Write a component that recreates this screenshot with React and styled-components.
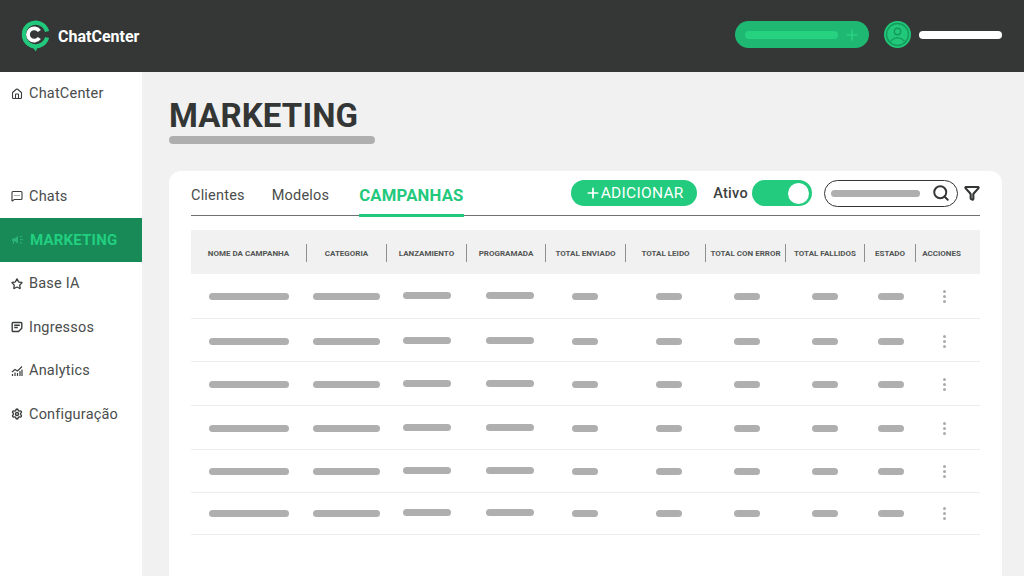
import React from "react";
import styled, { createGlobalStyle } from "styled-components";
import { Home, MessageSquareMore, Star, Settings, Search, Filter, Plus } from "lucide-react";

const GlobalStyle = createGlobalStyle`
  html, body {
    margin: 0;
    height: 100%;
    overflow: hidden;
    background: #f1f1f1;
    font-family: "Roboto", "Liberation Sans", sans-serif;
  }
`;

const Page = styled.div`
  width: 1024px;
  height: 576px;
  display: flex;
  flex-direction: column;
  overflow: hidden;
`;

const Header = styled.header`
  height: 72px;
  flex: none;
  background: #343736;
  display: flex;
  align-items: center;
  padding: 0 22px 0 20px;
`;

const Brand = styled.div`
  display: flex;
  align-items: center;
  gap: 8px;
  color: #fff;
  font-weight: 700;
  font-size: 16px;
  flex: 1;
`;

const HeaderRight = styled.div`
  display: flex;
  align-items: center;
  margin-bottom: 3px;
`;

const HeaderPill = styled.div`
  width: 134px;
  height: 27px;
  box-sizing: border-box;
  border-radius: 14px;
  background: #1fb872;
  display: flex;
  align-items: center;
  gap: 5px;
  padding: 0 8px 0 10px;
  color: #2fd98a;
`;

const PillBar = styled.div`
  flex: 1;
  height: 8px;
  border-radius: 4px;
  background: #26d180;
`;

const Avatar = styled.div`
  width: 27px;
  height: 27px;
  border-radius: 50%;
  background: #21c879;
  margin-left: 15px;
  display: flex;
`;

const UserBar = styled.div`
  width: 83px;
  height: 8px;
  border-radius: 4px;
  background: #fff;
  margin-left: 8px;
`;

const Body = styled.div`
  flex: 1;
  display: flex;
  min-height: 0;
`;

const Sidebar = styled.nav`
  width: 142px;
  flex: none;
  background: #fff;
`;

const NavItem = styled.div`
  height: ${(p) => p.$height}px;
  box-sizing: border-box;
  margin-top: ${(p) => p.$top || 0}px;
  padding-bottom: ${(p) => (p.$active ? 1 : 0)}px;
  display: flex;
  align-items: center;
  gap: 6px;
  padding-left: 11px;
  font-size: ${(p) => (p.$active ? 15 : 14.5)}px;
  letter-spacing: 0.2px;
  color: ${(p) => (p.$active ? "#22cf80" : "#4a4d4c")};
  font-weight: ${(p) => (p.$active ? 700 : 400)};
  background: ${(p) => (p.$active ? "#178a57" : "transparent")};
`;

const NavIcon = styled.span`
  display: flex;
  flex: none;
  color: ${(p) => (p.$active ? "#2cb477" : "#3a3d3c")};
`;

const Main = styled.main`
  flex: 1;
  padding: 27px 22px 0 27px;
  min-width: 0;
  display: flex;
  flex-direction: column;
`;

const Title = styled.h1`
  margin: 0;
  font-size: 33px;
  line-height: 34px;
  font-weight: 700;
  letter-spacing: 0.1px;
  color: #333635;
`;

const TitleBar = styled.div`
  width: 206px;
  height: 8px;
  border-radius: 4px;
  background: #afafaf;
  margin-top: 3px;
`;

const Card = styled.section`
  flex: 1;
  margin-top: 27px;
  background: #fff;
  border-radius: 12px 12px 0 0;
  padding: 0 22px;
`;

const Toolbar = styled.div`
  height: 45px;
  box-sizing: border-box;
  border-bottom: 1.5px solid #6f7170;
  display: flex;
  align-items: flex-end;
`;

const Tab = styled.div`
  height: 36px;
  box-sizing: border-box;
  margin-left: ${(p) => (p.$active ? 3 : 0)}px;
  margin-right: 27px;
  margin-bottom: -1.5px;
  padding-bottom: 4px;
  display: flex;
  align-items: center;
  font-size: ${(p) => (p.$active ? 16.7 : 14.5)}px;
  letter-spacing: 0.2px;
  font-weight: ${(p) => (p.$active ? 700 : 400)};
  color: ${(p) => (p.$active ? "#22c97c" : "#4a4d4c")};
  border-bottom: 3px solid ${(p) => (p.$active ? "#22c97c" : "transparent")};
`;

const Actions = styled.div`
  margin-left: auto;
  align-self: stretch;
  display: flex;
  align-items: center;
`;

const AddButton = styled.div`
  width: 126px;
  height: 26px;
  border-radius: 13px;
  background: #22cb7d;
  color: #fff;
  display: flex;
  align-items: center;
  justify-content: center;
  font-size: 15.5px;
  letter-spacing: 0.3px;
`;

const ActiveLabel = styled.span`
  margin-left: 16px;
  font-size: 14.5px;
  font-weight: 500;
  letter-spacing: 0.3px;
  color: #3c3f3e;
`;

const Toggle = styled.div`
  width: 60px;
  height: 26px;
  box-sizing: border-box;
  margin-left: 4px;
  border-radius: 13px;
  background: #22cb7d;
  display: flex;
  justify-content: flex-end;
  align-items: center;
  padding-right: 3px;
`;

const Knob = styled.div`
  width: 21px;
  height: 21px;
  border-radius: 50%;
  background: #fff;
`;

const SearchBox = styled.div`
  width: 134px;
  height: 27px;
  box-sizing: border-box;
  margin-left: 12px;
  border: 1px solid #333635;
  border-radius: 14px;
  display: flex;
  align-items: center;
  padding: 0 7px 0 6px;
  gap: 12px;
`;

const SearchBar = styled.div`
  flex: 1;
  height: 7px;
  border-radius: 4px;
  background: #afafaf;
`;

const FilterWrap = styled.div`
  margin-left: 6px;
  display: flex;
`;

const Table = styled.div`
  margin-top: 14px;
`;

const HeadRow = styled.div`
  height: 44px;
  box-sizing: border-box;
  padding-top: 2px;
  background: #f1f1f1;
  display: flex;
  align-items: center;
`;

const HeadCell = styled.div`
  width: ${(p) => p.$width}px;
  height: 18px;
  box-sizing: border-box;
  flex: none;
  display: flex;
  align-items: center;
  justify-content: center;
  white-space: nowrap;
  padding-right: ${(p) => p.$pad || 0}px;
  font-size: 8px;
  font-weight: 700;
  color: #525554;
  border-right: ${(p) => (p.$last ? "none" : "1px solid #8e9090")};
`;

const Row = styled.div`
  height: ${(p) => p.$height}px;
  box-sizing: border-box;
  padding-top: ${(p) => p.$shift}px;
  border-bottom: 1px solid #ececec;
  display: grid;
  grid-template-columns: 115px 81px 80px 86px 64px 104px 52px 104px 28px 78px;
  align-items: center;
  justify-items: center;
`;

const Bar = styled.div`
  width: ${(p) => p.$width}px;
  height: 7px;
  border-radius: 4px;
  background: #afafaf;
  margin-bottom: ${(p) => (p.$raised ? 2 : 0)}px;
`;

const Dots = styled.div`
  display: flex;
  flex-direction: column;
  gap: 2px;
`;

const Dot = styled.span`
  width: 3px;
  height: 3px;
  border-radius: 50%;
  background: #ababab;
`;

function MarketingIcon() {
  return (
    <svg width="13" height="12" viewBox="0 0 13 12" fill="currentColor">
      <path d="M1 4.500h2.500L7 2v7.500L3.500 7.200H3V10H2V7.200H1z" />
      <path d="M9 3l2-1M9 5.700h3M9 8.400l2 1" stroke="currentColor" fill="none" strokeWidth="1" />
    </svg>
  );
}

function NoteIcon() {
  return (
    <svg width="12" height="12" viewBox="0 0 12 12" fill="none" stroke="currentColor" strokeWidth="1.400">
      <path d="M2 1.500h8a.8.8 0 0 1 .8.8v5L7.500 10.500H2a.8.8 0 0 1-.8-.8V2.300a.8.8 0 0 1 .8-.8z" />
      <path d="M3.200 4.200h5.600M3.200 6.500h3.600" />
    </svg>
  );
}

function AnalyticsIcon() {
  return (
    <svg width="12" height="12" viewBox="0 0 12 12" fill="none" stroke="currentColor">
      <path d="M1 7l3-2.500 2.500 1.500L11 1.500" strokeWidth="1.100" />
      <path d="M1.500 11V9M4 11V7.500M6.500 11V8M9 11V6M11 11V4.500" strokeWidth="1.200" />
    </svg>
  );
}

const iconProps = { size: 12, strokeWidth: 2.2 };

const navItems = [
  { label: "ChatCenter", icon: <Home {...iconProps} />, height: 43 },
  { label: "Chats", icon: <MessageSquareMore {...iconProps} />, top: 59, height: 44 },
  { label: "MARKETING", icon: <MarketingIcon />, active: true, height: 44 },
  { label: "Base IA", icon: <Star size={12} strokeWidth={2.6} />, height: 43.5 },
  { label: "Ingressos", icon: <NoteIcon />, height: 43.5 },
  { label: "Analytics", icon: <AnalyticsIcon />, height: 43.5 },
  { label: "Configuração", icon: <Settings size={12} strokeWidth={2.8} />, height: 43.5 },
];

const headers = [
  { label: "NOME DA CAMPANHA", width: 116 },
  { label: "CATEGORIA", width: 80 },
  { label: "LANZAMIENTO", width: 80 },
  { label: "PROGRAMADA", width: 79 },
  { label: "TOTAL ENVIADO", width: 80 },
  { label: "TOTAL LEIDO", width: 80 },
  { label: "TOTAL CON ERROR", width: 80 },
  { label: "TOTAL FALLIDOS", width: 79 },
  { label: "ESTADO", width: 51 },
  { label: "ACCIONES", width: 64, pad: 13, last: true },
];

const rows = [
  { height: 45, shift: 0 },
  { height: 43, shift: 3 },
  { height: 44, shift: 1 },
  { height: 44, shift: 2 },
  { height: 43, shift: 1 },
  { height: 42, shift: 0 },
];

const bars = [
  { width: 80 },
  { width: 67 },
  { width: 48, raised: true },
  { width: 48, raised: true },
  { width: 26 },
  { width: 26 },
  { width: 26 },
  { width: 26 },
  { width: 26 },
];

function Logo() {
  return (
    <svg width="30" height="32" viewBox="0 0 30 32" fill="none">
      <path d="M27.100 11.500A11.800 11.800 0 1 0 27.100 17.500" stroke="#22c97c" strokeWidth="4.200" />
      <path d="M10.500 25l5.500 6.500 1.500-5.500z" fill="#22c97c" />
      <path d="M19.300 11A6.200 6.200 0 1 0 19.300 18" stroke="#fff" strokeWidth="3.800" />
      <path d="M17 14.500h8" stroke="#343736" strokeWidth="1" />
    </svg>
  );
}

function UserIcon() {
  return (
    <svg width="27" height="27" viewBox="0 0 27 27" fill="none" stroke="#159a5c" strokeWidth="1.400">
      <circle cx="13.500" cy="13.500" r="11" />
      <circle cx="13.500" cy="10.500" r="3.200" />
      <path d="M6.500 20.500c2-2.600 4.300-3.600 7-3.600s5 1 7 3.600" />
    </svg>
  );
}

export default function App() {
  return (
    <Page>
      <GlobalStyle />
      <Header>
        <Brand>
          <Logo />
          ChatCenter
        </Brand>
        <HeaderRight>
          <HeaderPill>
            <PillBar />
            <Plus size={18} strokeWidth={1.5} />
          </HeaderPill>
          <Avatar>
            <UserIcon />
          </Avatar>
          <UserBar />
        </HeaderRight>
      </Header>
      <Body>
        <Sidebar>
          {navItems.map(({ label, icon, top, active, height }) => (
            <NavItem key={label} $top={top} $active={active} $height={height}>
              <NavIcon $active={active}>{icon}</NavIcon>
              {label}
            </NavItem>
          ))}
        </Sidebar>
        <Main>
          <Title>MARKETING</Title>
          <TitleBar />
          <Card>
            <Toolbar>
              <Tab>Clientes</Tab>
              <Tab>Modelos</Tab>
              <Tab $active>CAMPANHAS</Tab>
              <Actions>
                <AddButton>
                  <Plus size={16} strokeWidth={2.6} />
                  ADICIONAR
                </AddButton>
                <ActiveLabel>Ativo</ActiveLabel>
                <Toggle>
                  <Knob />
                </Toggle>
                <SearchBox>
                  <SearchBar />
                  <Search size={18} strokeWidth={2.6} color="#333635" />
                </SearchBox>
                <FilterWrap>
                  <Filter size={16} strokeWidth={3.2} color="#333635" />
                </FilterWrap>
              </Actions>
            </Toolbar>
            <Table>
              <HeadRow>
                {headers.map(({ label, width, pad, last }) => (
                  <HeadCell key={label} $width={width} $pad={pad} $last={last}>
                    {label}
                  </HeadCell>
                ))}
              </HeadRow>
              {rows.map((row, r) => (
                <Row key={r} $height={row.height} $shift={row.shift}>
                  {bars.map((bar, i) => (
                    <Bar key={i} $width={bar.width} $raised={bar.raised} />
                  ))}
                  <Dots>
                    <Dot />
                    <Dot />
                    <Dot />
                  </Dots>
                </Row>
              ))}
            </Table>
          </Card>
        </Main>
      </Body>
    </Page>
  );
}
